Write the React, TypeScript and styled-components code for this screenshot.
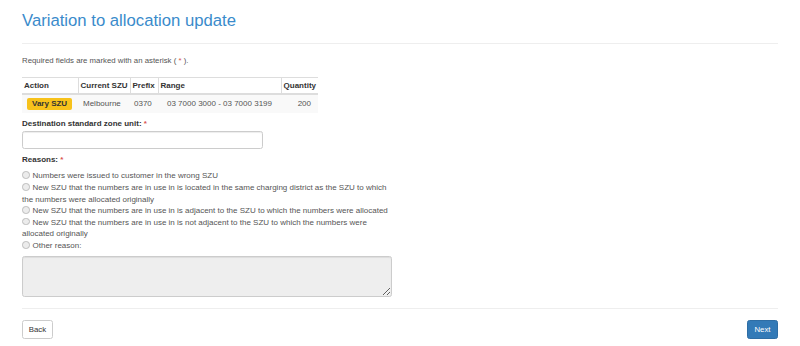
import styled, { createGlobalStyle } from "styled-components";

const GlobalStyle = createGlobalStyle`
  html, body {
    margin: 0;
    padding: 0;
    background: #fff;
  }
  body {
    font-family: "Liberation Sans", Arial, sans-serif;
    font-size: 8px;
    line-height: 11.6px;
    color: #555;
  }
`

const Page = styled.div`
  width: 800px;
  box-sizing: border-box;
  padding: 0 22px;
`

const Header = styled.div`
  padding: 12px 0 12.6px;
  border-bottom: 1px solid #eee;
`

const Title = styled.h2`
  margin: 0;
  font-size: 16.7px;
  line-height: 18.4px;
  font-weight: 400;
  color: #3a8bcb;
`

const Note = styled.p`
  margin: 10.5px 0 0;
  font-size: 7.8px;
`

const Star = styled.span`
  color: #d9534f;
`

const Table = styled.table`
  margin-top: 11px;
  border-collapse: collapse;
  table-layout: fixed;
  width: 296px;
`

const Th = styled.th<{ $w: number; $right?: boolean }>`
  width: ${p => p.$w}px;
  box-sizing: border-box;
  padding: 1.5px 2px;
  text-align: ${p => (p.$right ? "right" : "left")};
  font-weight: bold;
  color: #333;
  white-space: nowrap;
  border-top: 1px solid #ddd;
  border-bottom: 2px solid #ddd;
  border-left: 1px solid #ddd;
  &:first-child { border-left: none; }
`

const Td = styled.td<{ $right?: boolean; $pad?: number }>`
  padding: 3px ${p => (p.$right ? 7 : p.$pad ?? 5)}px 3px ${p => p.$pad ?? 5}px;
  text-align: ${p => (p.$right ? "right" : "left")};
  background: #f9f9f9;
  white-space: nowrap;
`

const Badge = styled.span`
  display: inline-block;
  padding: 0 5px;
  line-height: 12px;
  background: #f7c21b;
  border-radius: 2px;
  color: #333;
  font-weight: bold;
`

const Label = styled.div<{ $top: number }>`
  margin-top: ${p => p.$top}px;
  font-weight: bold;
  color: #333;
`

const Input = styled.input`
  display: block;
  margin-top: 2.2px;
  width: 241px;
  height: 18px;
  box-sizing: border-box;
  border: 1px solid #ccc;
  border-radius: 2.5px;
  box-shadow: inset 0 1px 1px rgba(0, 0, 0, 0.075);
  outline: none;
`

const Reasons = styled.div`
  margin-top: 4.4px;
  width: 372px;
`

const Reason = styled.div`
  line-height: 11.6px;
`

const Radio = styled.span`
  display: inline-block;
  width: 5.5px;
  height: 5.5px;
  margin-right: 3px;
  border: 1px solid #bdbdbd;
  border-radius: 50%;
  background: #ececec;
  vertical-align: -0.5px;
`

const TextArea = styled.textarea`
  display: block;
  margin-top: 4.6px;
  width: 370px;
  height: 41px;
  box-sizing: border-box;
  background: #eee;
  border: 1px solid #ccc;
  border-radius: 2.5px;
  box-shadow: inset 0 1px 1px rgba(0, 0, 0, 0.075);
  outline: none;
  resize: both;
`

const Rule = styled.div`
  margin-top: 11px;
  border-top: 1px solid #eee;
`

const Footer = styled.div`
  margin-top: 11px;
  display: flex;
  justify-content: space-between;
`

const Button = styled.button<{ $primary?: boolean }>`
  height: 19px;
  width: 31px;
  padding: 0;
  font-family: "Liberation Sans", Arial, sans-serif;
  font-size: 7.8px;
  border-radius: 2.5px;
  border: 1px solid ${p => (p.$primary ? "#2e6da4" : "#ccc")};
  background: ${p => (p.$primary ? "#337ab7" : "#fff")};
  color: ${p => (p.$primary ? "#fff" : "#333")};
`

const reasons = [
  "Numbers were issued to customer in the wrong SZU",
  "New SZU that the numbers are in use in is located in the same charging district as the SZU to which the numbers were allocated originally",
  "New SZU that the numbers are in use in is adjacent to the SZU to which the numbers were allocated",
  "New SZU that the numbers are in use in is not adjacent to the SZU to which the numbers were allocated originally",
  "Other reason:",
]

export default function App() {
  return (
    <>
      <GlobalStyle />
      <Page>
        <Header>
          <Title>Variation to allocation update</Title>
        </Header>

        <Note>Required fields are marked with an asterisk ( <Star>*</Star> ).</Note>

        <Table>
          <thead>
            <tr>
              <Th $w={56}>Action</Th>
              <Th $w={52}>Current SZU</Th>
              <Th $w={28}>Prefix</Th>
              <Th $w={123}>Range</Th>
              <Th $w={37} $right>Quantity</Th>
            </tr>
          </thead>
          <tbody>
            <tr>
              <Td><Badge>Vary SZU</Badge></Td>
              <Td>Melbourne</Td>
              <Td $pad={4}>0370</Td>
              <Td $pad={9}>03 7000 3000 - 03 7000 3199</Td>
              <Td $right>200</Td>
            </tr>
          </tbody>
        </Table>

        <Label $top={5}>Destination standard zone unit: <Star>*</Star></Label>
        <Input />

        <Label $top={5}>Reasons: <Star>*</Star></Label>
        <Reasons>
          {reasons.map(r => (
            <Reason key={r}><Radio />{r}</Reason>
          ))}
        </Reasons>

        <TextArea readOnly />

        <Rule />

        <Footer>
          <Button>Back</Button>
          <Button $primary>Next</Button>
        </Footer>
      </Page>
    </>
  )
}
